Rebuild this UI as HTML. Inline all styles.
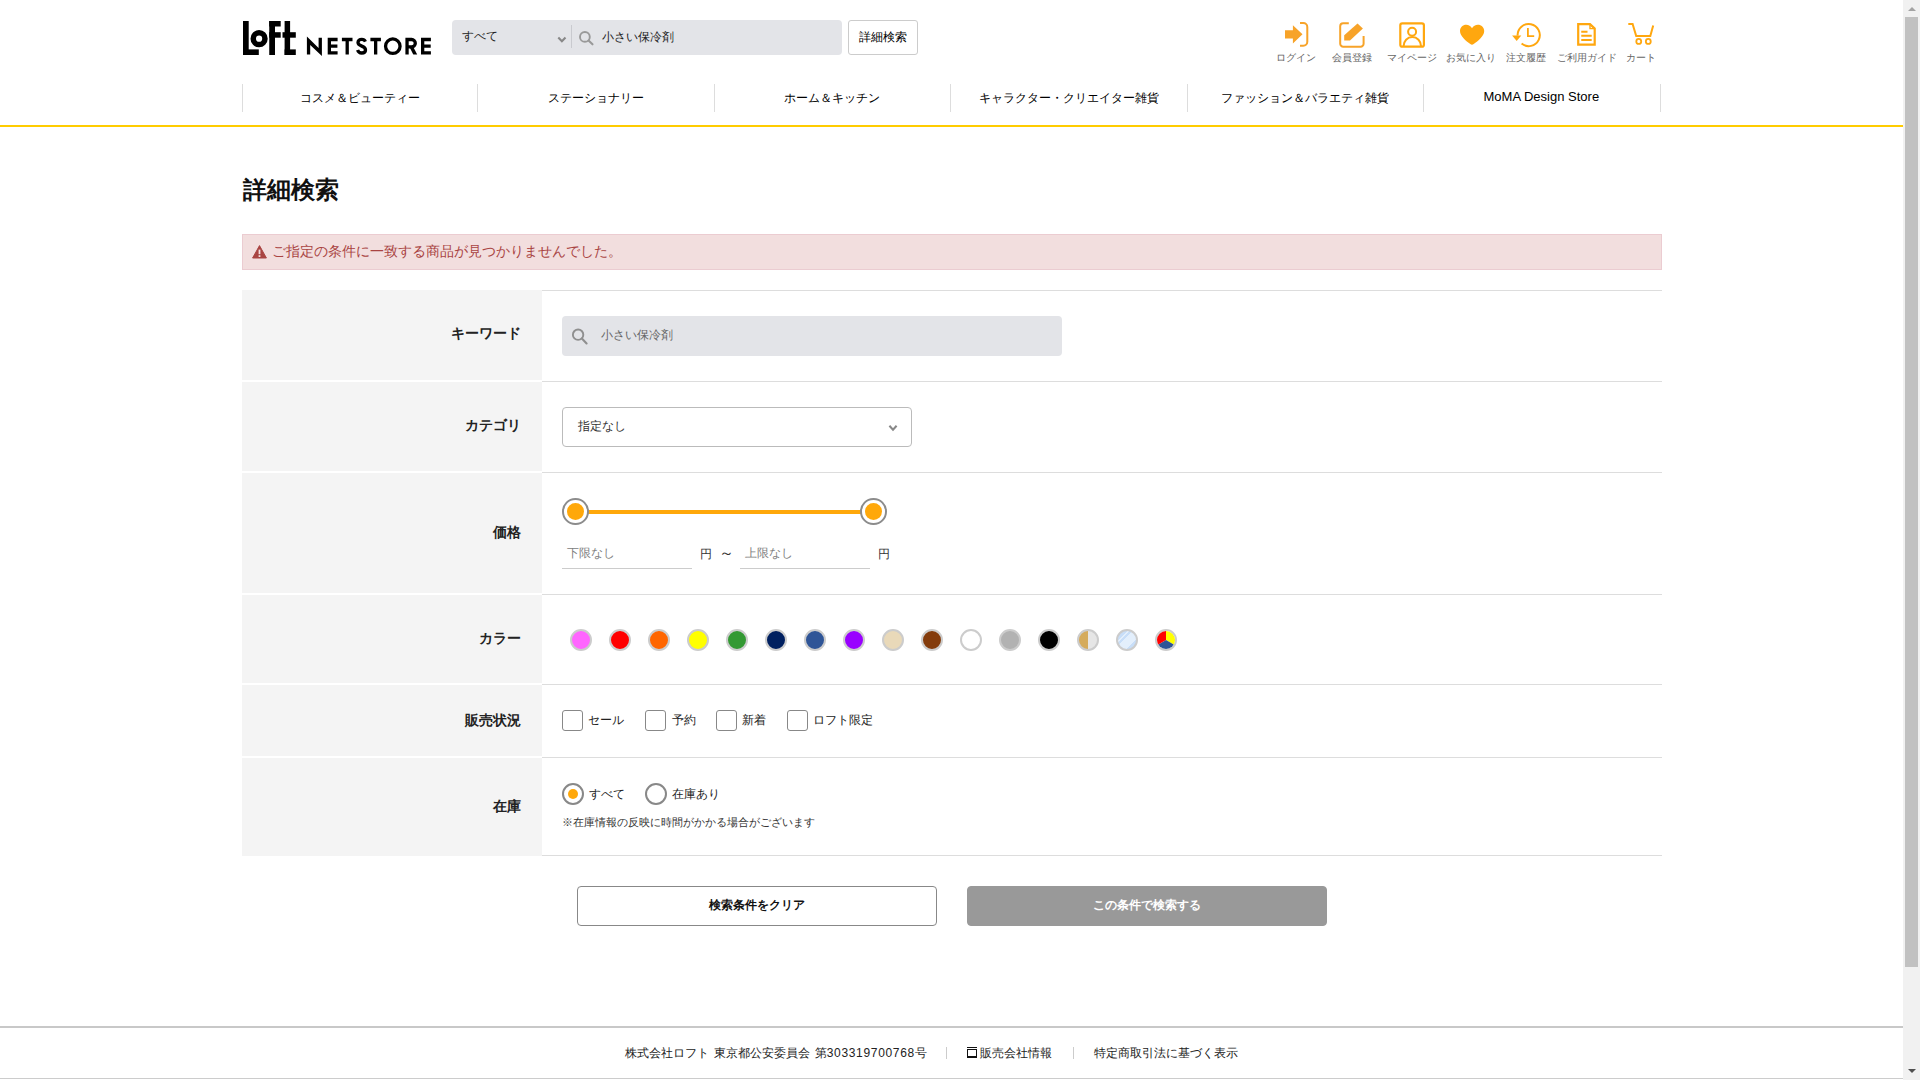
<!DOCTYPE html>
<html lang="ja">
<head>
<meta charset="utf-8">
<title>詳細検索 | LOFT NETSTORE</title>
<style>
*{box-sizing:border-box;margin:0;padding:0}
html,body{width:1920px;height:1080px;overflow:hidden;background:#fff}
body{font-family:"Liberation Sans",sans-serif;color:#333;font-size:13px;position:relative}
#page{position:absolute;left:0;top:0;width:1903px;height:1080px;overflow:hidden;background:#fff}
.abs{position:absolute}
/* header */
#logo{position:absolute;left:242px;top:20px;width:190px;height:37px}
#sbox{position:absolute;left:452px;top:20px;width:390px;height:35px;background:#e3e4e8;border-radius:4px}
#sbox .sel{position:absolute;left:10px;top:0;height:35px;line-height:33px;font-size:12px;color:#222}
#sbox .chev{position:absolute;left:105px;top:15px}
#sbox .sep{position:absolute;left:119px;top:5px;width:1px;height:23px;background:#c9cacf}
#sbox .mag{position:absolute;left:127px;top:10px}
#sbox .q{position:absolute;left:150px;top:0;height:35px;line-height:35px;font-size:12px;color:#222}
#dbtn{position:absolute;left:848px;top:20px;width:70px;height:35px;border:1px solid #ccc;border-radius:3px;background:#fff;font-size:12px;line-height:33px;text-align:center;color:#000}
.hi{position:absolute;top:22px;width:70px;text-align:center}
.hi svg{display:block;margin:0 auto}
.hi span{display:block;position:absolute;left:-10px;right:-10px;top:29px;font-size:10px;line-height:12px;color:#666;white-space:nowrap;text-align:center}
.hl{position:absolute;top:51.5px;width:80px;text-align:center;font-size:10px;line-height:12px;color:#666;white-space:nowrap}
/* nav */
#nav{position:absolute;left:242px;top:84px;width:1419px;height:28px}
#nav div{position:absolute;top:0;height:28px;width:236.33px;text-align:center;font-size:12px;line-height:29px;color:#000;white-space:nowrap}
#nav i{position:absolute;top:0;width:1px;height:28px;background:#ddd}
#yline{position:absolute;left:0;top:125px;width:1903px;height:2px;background:#ffcc00}
h1{position:absolute;left:242.5px;top:172px;font-size:23.5px;line-height:36px;font-weight:bold;color:#111;white-space:nowrap}
#alert{position:absolute;left:242px;top:234px;width:1420px;height:36px;background:#f2dede;border:1px solid #ebccd1;color:#a94442;font-size:14px;line-height:32px;padding-left:28.5px;white-space:nowrap}
#alert svg{position:absolute;left:9px;top:9.7px}
/* table */
.row{position:absolute;left:242px;width:1420px}
.row .th{position:absolute;left:0;top:0;bottom:0;width:300px;background:#f4f4f4;text-align:right;padding-right:21px;font-weight:bold;font-size:14px;color:#222;white-space:nowrap}
.row .td{position:absolute;left:300px;right:0;top:0;bottom:0;border-bottom:1px solid #ddd}
.row .td.first{border-top:1px solid #ddd}
.lbl{position:absolute;right:21px;white-space:nowrap;line-height:20px}
#kw{position:absolute;left:20px;top:25px;width:500px;height:40px;background:#e3e4e8;border-radius:4px;font-size:12px;line-height:39px;color:#666;padding-left:39px}
#kw svg{position:absolute;left:9px;top:12px}
#cat{position:absolute;left:20px;top:25px;width:350px;height:40px;border:1px solid #bbb;border-radius:4px;font-size:12px;line-height:37px;color:#333;padding-left:15px;background:#fff}
#cat svg{position:absolute;right:13px;top:16px}
.knob{position:absolute;width:26.6px;height:26.6px;border-radius:50%;border:2px solid #8c8c8c;background:#fff}
.knob::after{content:"";position:absolute;left:2.8px;top:2.8px;width:17px;height:17px;border-radius:50%;background:#ffa80a}
.pin{position:absolute;top:69px;width:130px;height:27px;border-bottom:1px solid #ccc;font-size:12px;line-height:23px;color:#808080;padding-left:5px}
.yen{position:absolute;top:69px;font-size:12px;line-height:24px;color:#333}
.sw{position:absolute;top:34px;width:22px;height:22px;border-radius:50%;border:2px solid #ccc;overflow:hidden}
.cb{position:absolute;top:25px;width:21px;height:21px;border:1px solid #888;border-radius:3px;background:#fff}
.ct{position:absolute;top:25px;font-size:12px;line-height:21px;color:#222;white-space:nowrap}
.rb{position:absolute;top:25px;width:22px;height:22px;border:2px solid #888;border-radius:50%;background:#fff}
.rb.on::after{content:"";position:absolute;left:4px;top:4px;width:10px;height:10px;border-radius:50%;background:#ffa80a}
.btn{position:absolute;top:886px;width:360px;height:40px;border-radius:4px;font-size:12px;font-weight:bold;line-height:37px;text-align:center;white-space:nowrap}
#fline1{position:absolute;left:0;top:1026px;width:1903px;height:2px;background:#c8c8c8}
#fline2{position:absolute;left:0;top:1078px;width:1903px;height:1px;background:#ccc}
.ft{position:absolute;top:1043.6px;font-size:12px;line-height:18px;color:#222;white-space:nowrap}
.fsep{position:absolute;top:1047px;width:1px;height:12px;background:#ccc}
/* scrollbar */
#sb{position:absolute;left:1903px;top:0;width:17px;height:1080px;background:#f1f1f1}
#sb .thumb{position:absolute;left:2px;top:17px;width:13px;height:950px;background:#c1c1c1}
#sb .up{position:absolute;left:4.5px;top:7px;width:0;height:0;border-left:4px solid transparent;border-right:4px solid transparent;border-bottom:4px solid #a3a3a3}
#sb .dn{position:absolute;left:4.5px;top:1069px;width:0;height:0;border-left:4px solid transparent;border-right:4px solid transparent;border-top:4px solid #505050}
</style>
</head>
<body>
<div id="page">

<svg id="logo" viewBox="0 0 190 37" fill="#000">
 <rect x="1" y="1" width="5.7" height="34"/><rect x="1" y="29.4" width="15.8" height="5.6"/>
 <circle cx="17.1" cy="18.7" r="5.85" fill="none" stroke="#000" stroke-width="5.5"/>
 <rect x="27.25" y="1" width="5.75" height="34"/><rect x="27.25" y="1" width="11.45" height="5.5"/><rect x="27.25" y="12.2" width="11.45" height="5.5"/>
 <rect x="42.6" y="1" width="5.5" height="34"/><rect x="40.5" y="12.2" width="13.3" height="5.5"/><rect x="42.6" y="29.4" width="11.2" height="5.6"/>
 <path d="M64.9,34.6 L64.9,16.4 L76.6,28.1 L76.6,17.85 L79.9,17.85 L79.9,36.1 L68.2,25.1 L68.2,34.6 Z"/>
 <path d="M85.7,17.85 h9.9 v3.3 h-6.6 v3.4 h6.4 v3.3 h-6.4 v3.45 h6.6 v3.3 h-9.9 Z"/>
 <path d="M99.9,17.85 h10.6 v3.3 h-3.65 v13.45 h-3.3 v-13.45 h-3.65 Z"/>
 <path d="M123.4,21.6 C122.6,19.9 121.2,19.4 119.8,19.4 C117.4,19.4 116,20.9 116,22.5 C116,24.4 117.5,25.2 119.8,26.1 C122.3,27.1 123.5,28.1 123.5,29.9 C123.5,31.8 121.9,33 119.7,33 C117.6,33 116.2,31.9 115.6,30" fill="none" stroke="#000" stroke-width="3.3"/>
 <path d="M128.4,17.85 h10.5 v3.3 h-3.6 v13.45 h-3.3 v-13.45 h-3.6 Z"/>
 <circle cx="150.8" cy="26.2" r="7.25" fill="none" stroke="#000" stroke-width="3.3"/>
 <path d="M165.05,34.6 V19.5 H169.6 A3.7,3.7 0 0 1 169.6,26.9 H165.05" fill="none" stroke="#000" stroke-width="3.3"/>
 <path d="M167.2,26.6 L171,26.6 L175.2,34.6 L171.3,34.6 Z"/>
 <path d="M179,17.85 h9.9 v3.3 h-6.6 v3.4 h6.4 v3.3 h-6.4 v3.45 h6.6 v3.3 h-9.9 Z"/>
</svg>
<div id="sbox">
 <div class="sel">すべて</div>
 <svg class="abs" style="left:100px;top:10px" width="20" height="16" viewBox="100 10 20 16"><path d="M106.3,17.5 L109.9,21.2 L113.5,17.5" fill="none" stroke="#888" stroke-width="2.1"/></svg>
 <div class="sep"></div>
 <svg class="abs" style="left:124px;top:8px" width="20" height="20" viewBox="124 8 20 20"><circle cx="132.9" cy="16.9" r="4.9" fill="none" stroke="#999" stroke-width="1.9"/><path d="M136.5,20.5 L140.5,24.3" stroke="#999" stroke-width="2.1" stroke-linecap="round"/></svg>
 <div class="q">小さい保冷剤</div>
</div>
<div id="dbtn">詳細検索</div>
<svg class="abs" style="left:1270px;top:16px" width="400" height="34" viewBox="1270 16 400 34" fill="none">
 <!-- login -->
 <path d="M1285,30.2 H1292.9 V25.2 L1302.5,34.35 L1292.9,43.5 V38.5 H1285 Z" fill="#f7a329"/>
 <path d="M1300,23 H1303.3 A4,4 0 0 1 1307.3,27 V41.8 A4,4 0 0 1 1303.3,45.8 H1300" stroke="#f7a329" stroke-width="2"/>
 <!-- edit -->
 <path d="M1348.8,23.3 H1343.2 A3,3 0 0 0 1340.2,26.3 V43.7 A3,3 0 0 0 1343.2,46.7 H1360.6 A3,3 0 0 0 1363.6,43.7 V36" stroke="#f7a329" stroke-width="2"/>
 <path d="M1344.2,40.6 V35.2 L1357.5,23.5 L1362.9,28.5 L1350,40.6 Z" fill="#f7a329"/>
 <!-- mypage -->
 <rect x="1400.3" y="23.3" width="23.6" height="23.4" rx="2" stroke="#ffa70f" stroke-width="2.2"/>
 <circle cx="1412.1" cy="31.8" r="4" stroke="#ffa70f" stroke-width="2"/>
 <path d="M1403.5,46.5 A8.8,9.5 0 0 1 1421.1,46.5" stroke="#ffa70f" stroke-width="2"/>
 <!-- heart -->
 <path d="M1472,28.3 C1470.8,26.2 1468.7,24.75 1466.2,24.75 C1462.8,24.75 1460,27.4 1460,31 C1460,36.2 1466,40.9 1470.3,44.1 Q1472,45.3 1473.7,44.1 C1478,40.9 1484.2,36.2 1484.2,31 C1484.2,27.4 1481.3,24.75 1477.9,24.75 C1475.4,24.75 1473.2,26.2 1472,28.3 Z" fill="#ffa70f"/>
 <!-- history -->
 <path d="M1517.6,35.6 A11.1,11.1 0 1 1 1521.6,43.6" stroke="#ffa70f" stroke-width="2"/>
 <path d="M1512.1,35.6 H1521.3 L1516.7,41 Z" fill="#ffa70f"/>
 <path d="M1527.9,28.1 V36.1 H1534.2" stroke="#ffa70f" stroke-width="1.8"/>
 <!-- guide -->
 <path d="M1578.2,24.2 H1590 L1594.7,28.6 V44.7 H1578.2 Z" stroke="#ffa70f" stroke-width="2.2"/>
 <path d="M1590,24.2 V28.6 H1594.7" stroke="#ffa70f" stroke-width="1.4"/>
 <path d="M1581.25,31.8 H1587.5 M1581.25,35.8 H1591.7 M1581.25,39.9 H1591.7" stroke="#ffa70f" stroke-width="2"/>
 <!-- cart -->
 <path d="M1628.3,24 H1632.6 L1636.2,36 H1650.3 L1653.2,25.5" stroke="#ffa70f" stroke-width="2"/>
 <circle cx="1638.75" cy="41.4" r="2.45" stroke="#ffa70f" stroke-width="1.8"/>
 <circle cx="1648.3" cy="41.4" r="2.45" stroke="#ffa70f" stroke-width="1.8"/>
</svg>
<div class="hl" style="left:1256.4px">ログイン</div>
<div class="hl" style="left:1311.7px">会員登録</div>
<div class="hl" style="left:1371.5px">マイページ</div>
<div class="hl" style="left:1431px">お気に入り</div>
<div class="hl" style="left:1486.4px">注文履歴</div>
<div class="hl" style="left:1546.5px">ご利用ガイド</div>
<div class="hl" style="left:1601.4px">カート</div>


<div id="nav">
 <div style="left:-0.50px">コスメ＆ビューティー</div>
 <div style="left:235.83px">ステーショナリー</div>
 <div style="left:472.17px">ホーム＆キッチン</div>
 <div style="left:708.50px">キャラクター・クリエイター雑貨</div>
 <div style="left:944.83px">ファッション＆バラエティ雑貨</div>
 <div style="left:1181.16px;font-size:13px;line-height:25px">MoMA Design Store</div>
 <i style="left:0px"></i>
 <i style="left:235px"></i>
 <i style="left:472px"></i>
 <i style="left:708px"></i>
 <i style="left:945px"></i>
 <i style="left:1181px"></i>
 <i style="left:1418px"></i>
</div>
<div id="yline"></div>


<h1>詳細検索</h1>
<div id="alert"><svg width="15" height="14" viewBox="0 0 15 14"><path d="M7.5,0.6 L14.4,13 H0.6 Z" fill="#a94442" stroke="#a94442" stroke-width="1" stroke-linejoin="round"/><rect x="6.6" y="4.6" width="1.8" height="4.6" fill="#f2dede"/><rect x="6.6" y="10.2" width="1.8" height="1.8" fill="#f2dede"/></svg>ご指定の条件に一致する商品が見つかりませんでした。</div>

<div class="row" style="top:290px;height:92px"><div class="th" style="height:90px"><span class="lbl" style="top:33px">キーワード</span></div>
 <div class="td first"><div id="kw"><svg width="18" height="18" viewBox="0 0 18 18"><circle cx="7.1" cy="6.7" r="5.2" fill="none" stroke="#8f8f8f" stroke-width="1.9"/><path d="M10.9,10.5 L15.6,15.4" stroke="#8f8f8f" stroke-width="2.1" stroke-linecap="round"/></svg>小さい保冷剤</div></div></div>

<div class="row" style="top:382px;height:91px"><div class="th" style="height:89px"><span class="lbl" style="top:33px">カテゴリ</span></div>
 <div class="td"><div id="cat">指定なし<svg width="10" height="8" viewBox="0 0 10 8"><path d="M1.4,1.8 L5,5.6 L8.6,1.8" fill="none" stroke="#888" stroke-width="2.1"/></svg></div></div></div>

<div class="row" style="top:473px;height:122px"><div class="th" style="height:120px"><span class="lbl" style="top:49px">価格</span></div>
 <div class="td">
  <div class="abs" style="left:33px;top:37px;width:298px;height:4px;background:#ffa80a"></div>
  <div class="knob" style="left:20px;top:25px"></div><div class="knob" style="left:318px;top:25px"></div>
  <div class="pin" style="left:20px">下限なし</div><div class="yen" style="left:157.5px">円</div><div class="yen" style="left:176.5px;font-size:15px;top:68px">～</div>
  <div class="pin" style="left:198px">上限なし</div><div class="yen" style="left:335.5px">円</div>
 </div></div>

<div class="row" style="top:595px;height:90px"><div class="th" style="height:88px"><span class="lbl" style="top:33px">カラー</span></div>
 <div class="td">
<div class="sw" style="left:28px;background:#ff66ff"></div>
<div class="sw" style="left:67px;background:#ff0000"></div>
<div class="sw" style="left:106px;background:#ff6600"></div>
<div class="sw" style="left:145px;background:#ffff00"></div>
<div class="sw" style="left:184px;background:#339933"></div>
<div class="sw" style="left:223px;background:#002060"></div>
<div class="sw" style="left:262px;background:#2f5597"></div>
<div class="sw" style="left:301px;background:#9900ff"></div>
<div class="sw" style="left:340px;background:#e9d9b9"></div>
<div class="sw" style="left:379px;background:#843c0c"></div>
<div class="sw" style="left:418px;background:#ffffff"></div>
<div class="sw" style="left:457px;background:#b2b2b2"></div>
<div class="sw" style="left:496px;background:#000000"></div>
<div class="sw" style="left:535px;background:linear-gradient(90deg,#d5ab5c 0,#d5ab5c 49%,#e6e6e6 49%,#e6e6e6 100%)"></div>
<div class="sw" style="left:574px;background:linear-gradient(135deg,#c8def8 0,#c8def8 26%,#e3effc 26%,#e3effc 31%,#c8def8 31%,#c8def8 41%,#e3effc 41%,#e3effc 73%,#c8def8 73%,#c8def8 100%)"></div>
<div class="sw" style="left:613px;background:#fff"><svg style="position:absolute;left:0;top:0" width="18" height="18" viewBox="-9 -9 18 18"><path d="M0,0 L0,-12 A12,12 0 0 1 10.39,6 Z" fill="#ffff00"/><path d="M0,0 L10.39,6 A12,12 0 0 1 -10.39,6 Z" fill="#2f5597"/><path d="M0,0 L-10.39,6 A12,12 0 0 1 0,-12 Z" fill="#ff0000"/></svg></div>
 </div></div>

<div class="row" style="top:685px;height:73px"><div class="th" style="height:71px"><span class="lbl" style="top:25px">販売状況</span></div>
 <div class="td">
  <div class="cb" style="left:20px"></div><div class="ct" style="left:45.5px">セール</div>
  <div class="cb" style="left:103px"></div><div class="ct" style="left:129.5px">予約</div>
  <div class="cb" style="left:174px"></div><div class="ct" style="left:200px">新着</div>
  <div class="cb" style="left:245px"></div><div class="ct" style="left:270.5px">ロフト限定</div>
 </div></div>

<div class="row" style="top:758px;height:98px"><div class="th" style="height:98px"><span class="lbl" style="top:38px">在庫</span></div>
 <div class="td">
  <div class="rb on" style="left:20px"></div><div class="ct" style="left:47px;top:25.6px">すべて</div>
  <div class="rb" style="left:103px"></div><div class="ct" style="left:130px;top:25.6px">在庫あり</div>
  <div class="abs" style="left:20px;top:54.5px;font-size:11px;line-height:18px;color:#333;white-space:nowrap">※在庫情報の反映に時間がかかる場合がございます</div>
 </div></div>

<div class="btn" style="left:577px;background:#fff;border:1px solid #888;color:#111">検索条件をクリア</div>
<div class="btn" style="left:967px;background:#999;border:1px solid #999;color:#fff">この条件で検索する</div>


<div id="fline1"></div>
<div class="ft" style="left:625px;word-spacing:1.5px">株式会社ロフト 東京都公安委員会 第<span style="letter-spacing:0.68px">303319700768</span>号</div>
<div class="fsep" style="left:946px"></div>
<div class="abs" style="left:967px;top:1047px;width:10px;height:1px;background:#111"></div><div class="abs" style="left:967px;top:1049px;width:10px;height:9px;border:1.4px solid #111;border-bottom-width:2.4px"></div>
<div class="ft" style="left:980px">販売会社情報</div>
<div class="fsep" style="left:1073px"></div>
<div class="ft" style="left:1094px">特定商取引法に基づく表示</div>
<div id="fline2"></div>

</div>
<div id="sb"><div class="up"></div><div class="thumb"></div><div class="dn"></div></div>
</body>
</html>
